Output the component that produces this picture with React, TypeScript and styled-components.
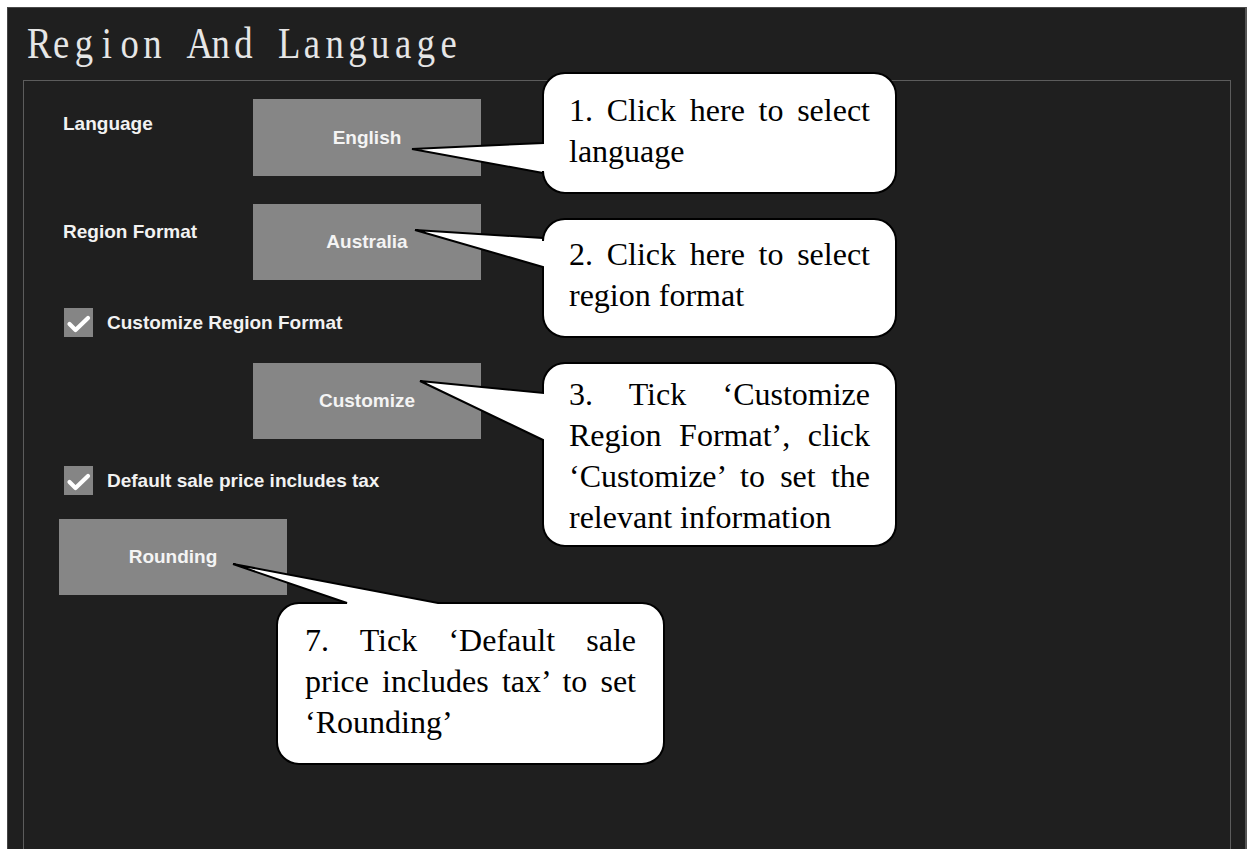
import React from "react";
import styled, { createGlobalStyle } from "styled-components";

const GlobalStyle = createGlobalStyle`
  html, body {
    margin: 0;
    padding: 0;
    background: #ffffff;
    overflow: hidden;
  }
  * { box-sizing: border-box; }
`;

const Page = styled.div`
  position: relative;
  width: 1247px;
  height: 849px;
  padding: 7px 0 0 7px;
  overflow: hidden;
`;

const Frame = styled.div`
  width: 1240px;
  height: 900px;
  background: #1f1f1f;
  border-top: 1px solid #4a4a4a;
  border-left: 1px solid #444444;
  border-right: 2px solid #555555;
  display: flex;
  flex-direction: column;
`;

const TitleBar = styled.div`
  height: 72px;
  padding-left: 19px;
  overflow: hidden;
`;

/* Title set on a fixed-width character grid (the original uses a monospaced serif face) */
const Title = styled.h1`
  margin: 0;
  display: inline-flex;
  font-family: "Liberation Serif", "Times New Roman", serif;
  font-weight: 400;
  font-size: 45px;
  line-height: 70px;
  color: #e6e6e6;
  white-space: nowrap;
  transform: scaleX(0.814);
  transform-origin: left center;
`;

const TitleCell = styled.span`
  display: inline-block;
  width: 28px;
  text-align: center;
`;

const Panel = styled.div`
  margin-left: 15px;
  width: 1208px;
  flex: 1;
  border: 1px solid #5c5c5c;
  border-bottom: none;
  padding: 18px 0 0 35px;
  display: flex;
  flex-direction: column;
`;

const FieldRow = styled.div<{ $gap: number }>`
  display: grid;
  grid-template-columns: 194px 228px;
  align-items: start;
  margin-top: ${(p) => p.$gap}px;
`;

const FieldLabel = styled.div<{ $offset: number }>`
  padding: ${(p) => p.$offset}px 0 0 4px;
  font-family: "Liberation Sans", Arial, sans-serif;
  font-weight: 700;
  font-size: 19px;
  line-height: 22px;
  color: #f2f2f2;
  white-space: nowrap;
`;

const GrayButton = styled.div<{ $h: number; $gap?: number; $indent?: number }>`
  width: 228px;
  height: ${(p) => p.$h}px;
  margin-top: ${(p) => p.$gap ?? 0}px;
  margin-left: ${(p) => p.$indent ?? 0}px;
  background: #868686;
  display: flex;
  align-items: center;
  justify-content: center;
  font-family: "Liberation Sans", Arial, sans-serif;
  font-weight: 700;
  font-size: 19px;
  color: #f4f4f4;
  white-space: nowrap;
`;

const CheckRow = styled.div<{ $gap: number }>`
  display: flex;
  align-items: center;
  gap: 14px;
  margin-top: ${(p) => p.$gap}px;
  padding-left: 5px;
`;

const CheckBox = styled.div`
  width: 29px;
  height: 29px;
  background: #858585;
  display: flex;
  align-items: center;
  justify-content: center;
`;

const CheckLabel = styled.span`
  font-family: "Liberation Sans", Arial, sans-serif;
  font-weight: 700;
  font-size: 19px;
  line-height: 22px;
  color: #f2f2f2;
  white-space: nowrap;
`;

const Callout = styled.div<{ $x: number; $y: number; $w: number; $h: number }>`
  position: absolute;
  left: ${(p) => p.$x}px;
  top: ${(p) => p.$y}px;
  width: ${(p) => p.$w}px;
  height: ${(p) => p.$h}px;
`;

const BubbleSvg = styled.svg`
  position: absolute;
  left: 0;
  top: 0;
  overflow: visible;
`;

const CalloutText = styled.div<{ $padTop: number; $padX: number }>`
  position: relative;
  padding: ${(p) => p.$padTop}px ${(p) => p.$padX}px 0;
  font-family: "Liberation Serif", "Times New Roman", serif;
  font-size: 32px;
  line-height: 41px;
  color: #000000;
  text-align: justify;
  text-align-last: left;
`;

type Tail =
  | { side: "left"; tx: number; ty: number; a: number; b: number }
  | { side: "top"; tx: number; ty: number; a: number; b: number };

function bubblePath(w: number, h: number, r: number, t: Tail): string {
  const arc = (x: number, y: number) => `A ${r} ${r} 0 0 1 ${x} ${y}`;
  if (t.side === "left") {
    return [
      `M ${r} 0`,
      `H ${w - r}`,
      arc(w, r),
      `V ${h - r}`,
      arc(w - r, h),
      `H ${r}`,
      arc(0, h - r),
      `V ${t.b}`,
      `L ${t.tx} ${t.ty}`,
      `L 0 ${t.a}`,
      `V ${r}`,
      arc(r, 0),
      "Z",
    ].join(" ");
  }
  return [
    `M ${r} 0`,
    `H ${t.a}`,
    `L ${t.tx} ${t.ty}`,
    `L ${t.b} 0`,
    `H ${w - r}`,
    arc(w, r),
    `V ${h - r}`,
    arc(w - r, h),
    `H ${r}`,
    arc(0, h - r),
    `V ${r}`,
    arc(r, 0),
    "Z",
  ].join(" ");
}

interface BubbleProps {
  x: number;
  y: number;
  w: number;
  h: number;
  tail: Tail;
  padTop: number;
  padX: number;
  children: React.ReactNode;
}

function Bubble({ x, y, w, h, tail, padTop, padX, children }: BubbleProps) {
  return (
    <Callout $x={x} $y={y} $w={w} $h={h}>
      <BubbleSvg width={w} height={h} viewBox={`0 0 ${w} ${h}`}>
        <path
          d={bubblePath(w, h, 22, tail)}
          fill="#ffffff"
          stroke="#000000"
          strokeWidth={2}
          strokeLinejoin="miter"
        />
      </BubbleSvg>
      <CalloutText $padTop={padTop} $padX={padX}>
        {children}
      </CalloutText>
    </Callout>
  );
}

function Tick() {
  return (
    <svg width="29" height="29" viewBox="0 0 29 29">
      <polyline
        points="5.5,16 11.5,22 24,10"
        fill="none"
        stroke="#ffffff"
        strokeWidth={4.2}
        strokeLinecap="round"
        strokeLinejoin="round"
      />
    </svg>
  );
}

const TITLE = "Region And Language";

export default function App() {
  return (
    <>
      <GlobalStyle />
      <Page>
        <Frame>
          <TitleBar>
            <Title aria-label={TITLE}>
              {TITLE.split("").map((ch, i) => (
                <TitleCell key={i}>{ch === " " ? "\u00a0" : ch}</TitleCell>
              ))}
            </Title>
          </TitleBar>
          <Panel>
            <FieldRow $gap={0}>
              <FieldLabel $offset={14}>Language</FieldLabel>
              <GrayButton $h={77}>English</GrayButton>
            </FieldRow>
            <FieldRow $gap={28}>
              <FieldLabel $offset={17}>Region Format</FieldLabel>
              <GrayButton $h={76}>Australia</GrayButton>
            </FieldRow>
            <CheckRow $gap={28}>
              <CheckBox>
                <Tick />
              </CheckBox>
              <CheckLabel>Customize Region Format</CheckLabel>
            </CheckRow>
            <GrayButton $h={76} $gap={26} $indent={194}>
              Customize
            </GrayButton>
            <CheckRow $gap={27}>
              <CheckBox>
                <Tick />
              </CheckBox>
              <CheckLabel>Default sale price includes tax</CheckLabel>
            </CheckRow>
            <GrayButton $h={76} $gap={24}>
              Rounding
            </GrayButton>
          </Panel>
        </Frame>

        <Bubble
          x={543}
          y={73}
          w={353}
          h={120}
          tail={{ side: "left", tx: -131, ty: 76, a: 70, b: 100 }}
          padTop={17}
          padX={26}
        >
          1. Click here to select language
        </Bubble>
        <Bubble
          x={543}
          y={219}
          w={353}
          h={118}
          tail={{ side: "left", tx: -128, ty: 11, a: 19, b: 48 }}
          padTop={15}
          padX={26}
        >
          2. Click here to select region format
        </Bubble>
        <Bubble
          x={543}
          y={363}
          w={353}
          h={183}
          tail={{ side: "left", tx: -123, ty: 18, a: 30, b: 77 }}
          padTop={11}
          padX={26}
        >
          3. Tick ‘Customize Region Format’, click ‘Customize’ to set the relevant information
        </Bubble>
        <Bubble
          x={277}
          y={603}
          w={387}
          h={161}
          tail={{ side: "top", tx: -44, ty: -39, a: 70, b: 161 }}
          padTop={17}
          padX={28}
        >
          7. Tick ‘Default sale price includes tax’ to set ‘Rounding’
        </Bubble>
      </Page>
    </>
  );
}
